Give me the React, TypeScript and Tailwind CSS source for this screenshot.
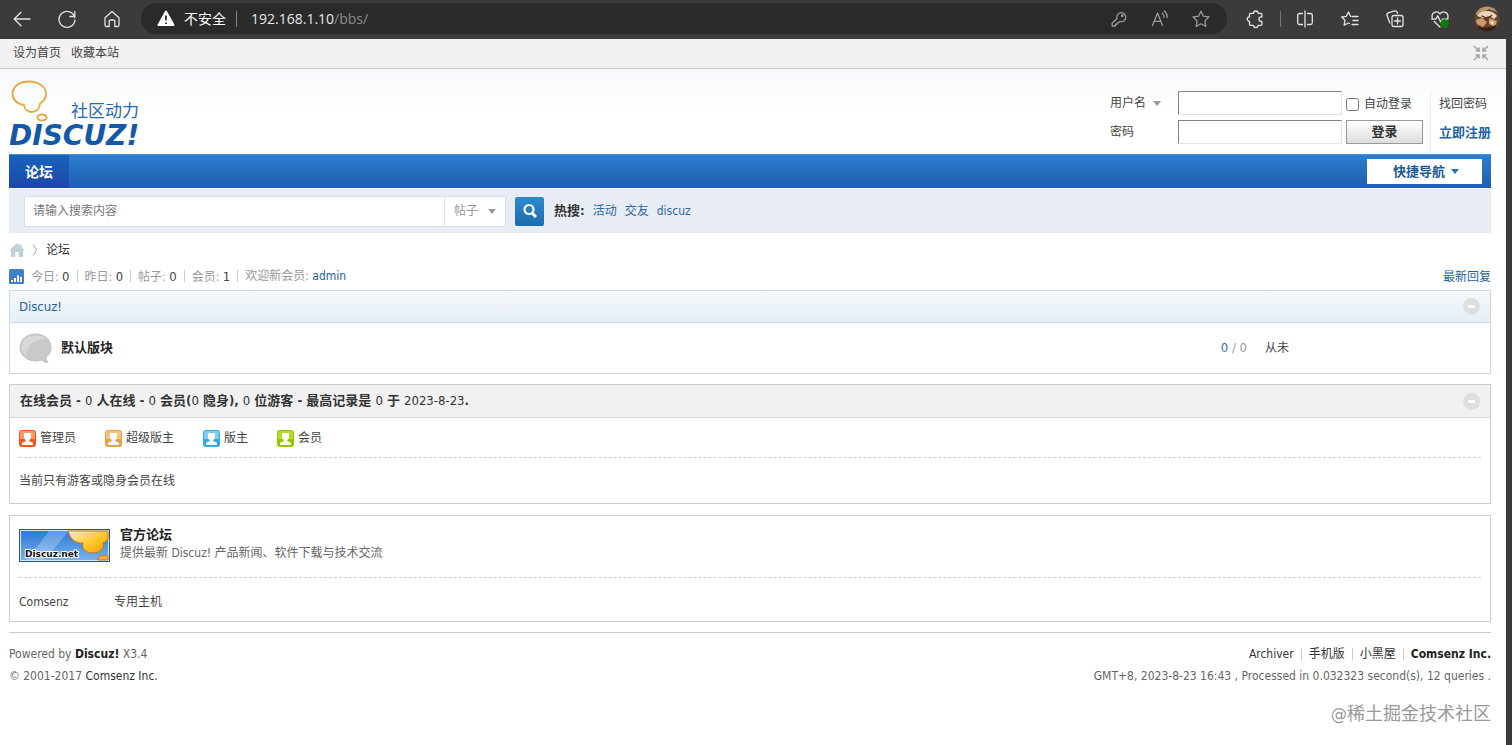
import type { ReactNode } from 'react';

interface IconProps {
  children: ReactNode;
  className?: string;
}

interface RoleLegend {
  label: string;
  light: string;
  dark: string;
}

const roles: RoleLegend[] = [
  { label: '管理员', light: '#f79a68', dark: '#f0551c' },
  { label: '超级版主', light: '#f5c37c', dark: '#e8a042' },
  { label: '版主', light: '#7fcdf0', dark: '#35a9dc' },
  { label: '会员', light: '#b5dc2c', dark: '#93c400' },
];

const stats = [
  { label: '今日', value: '0' },
  { label: '昨日', value: '0' },
  { label: '帖子', value: '0' },
  { label: '会员', value: '1' },
];

const hotSearches = ['活动', '交友', 'discuz'];

const Icon = ({ children, className = 'text-[#e4e4e4]' }: IconProps) => (
  <svg
    width="20"
    height="20"
    viewBox="0 0 20 20"
    fill="none"
    stroke="currentColor"
    strokeWidth="1.3"
    strokeLinecap="round"
    strokeLinejoin="round"
    className={className}
    aria-hidden="true"
  >
    {children}
  </svg>
);

const ToolButton = ({ label, children }: { label: string; children: ReactNode }) => (
  <button type="button" aria-label={label} className="flex h-5 w-5 shrink-0 items-center justify-center">
    {children}
  </button>
);

const Caret = ({ className }: { className: string }) => (
  <svg width="8" height="5" viewBox="0 0 8 5" className={className} aria-hidden="true">
    <path d="M0 0h8L4 5z" fill="currentColor" />
  </svg>
);

const Divider = () => <span className="h-3 w-px bg-[#cccccc]" />;

const BrowserBar = () => (
  <header className="flex h-[39px] items-center bg-[#3b3b3b] px-3 pb-[2px]">
    <div className="flex items-center gap-[25px]">
      <ToolButton label="Back">
        <Icon>
          <path d="M18 10H2.500M9 3.200 2.200 10 9 16.800" />
        </Icon>
      </ToolButton>
      <ToolButton label="Refresh">
        <Icon>
          <path d="M17.800 8.500A8 8 0 1 0 18 11M17.800 2.500v5h-5" />
        </Icon>
      </ToolButton>
      <ToolButton label="Home">
        <Icon>
          <path d="M3 8.800 10 2.500l7 6.300V16a1.500 1.500 0 0 1-1.500 1.500h-2.700V12a1 1 0 0 0-1-1H8.200a1 1 0 0 0-1 1v5.500H4.500A1.500 1.500 0 0 1 3 16z" />
        </Icon>
      </ToolButton>
    </div>
    <div className="ml-[19px] flex h-[31px] flex-1 items-center rounded-full bg-[#2a2a2a] px-4 font-[family-name:'Open_Sans','Noto_Sans_CJK_SC',sans-serif] text-sm">
      <svg width="18" height="17" viewBox="0 0 18 17" aria-hidden="true">
        <path d="M9 1.500 16.500 15h-15z" fill="#fff" stroke="#fff" strokeWidth="2" strokeLinejoin="round" />
        <path d="M9 5.500v5M9 12.500v1.500" stroke="#2a2a2a" strokeWidth="1.800" />
      </svg>
      <span className="ml-[9px] text-white">不安全</span>
      <span className="mx-[10px] h-4 w-px bg-[#858585]" />
      <span className="ml-1 flex-1 text-[#e8e8e8]">
        192.168.1.10<span className="text-[#8c8c8c]">/bbs/</span>
      </span>
      <div className="flex items-center gap-[21px]">
        <ToolButton label="Saved passwords">
          <Icon className="text-[#9a9a9a]">
            <path d="M8 9.500a4.500 4.500 0 1 1 3 3l-1.500 1.300H8v1.500H6.500v1.700H3.200v-2.800z" />
            <circle cx="13.300" cy="6.700" r="0.800" />
          </Icon>
        </ToolButton>
        <ToolButton label="Read aloud">
          <Icon className="text-[#9a9a9a]">
            <path d="M2.500 16.500 7.500 4l5 12.500M4.200 12.300h6.600M12.300 4.300a5 5 0 0 1 1.700 4M14.300 2a8 8 0 0 1 3 6.500" />
          </Icon>
        </ToolButton>
        <ToolButton label="Add to favourites">
          <Icon className="text-[#9a9a9a]">
            <path d="m10 2.200 2.400 5 5.500.8-4 3.900 1 5.500-4.900-2.600-4.900 2.600 1-5.500-4-3.900 5.500-.8z" />
          </Icon>
        </ToolButton>
      </div>
    </div>
    <div className="ml-[19px] flex items-center">
      <ToolButton label="Extensions">
        <Icon>
          <path d="M4.500 4.300h3a2.300 2.300 0 0 1 4.600 0h2.800a1 1 0 0 1 1 1v2.600h-.8a2.200 2.200 0 0 0 0 4.400h.8v3a1 1 0 0 1-1 1h-2.800a2.300 2.300 0 0 1-4.600 0h-3a1 1 0 0 1-1-1v-3a2.200 2.200 0 0 1 0-4.400V5.300a1 1 0 0 1 1-1z" />
        </Icon>
      </ToolButton>
      <span className="mx-[14px] h-4 w-px bg-[#777]" />
      <div className="flex items-center gap-[25px]">
        <ToolButton label="Split screen">
          <Icon>
            <path d="M10 2v16M7.500 4.500h-3A1.800 1.800 0 0 0 2.700 6.300v7.400a1.800 1.800 0 0 0 1.800 1.800h3M12.500 4.500h3a1.800 1.800 0 0 1 1.800 1.800v7.400a1.800 1.800 0 0 1-1.800 1.800h-3" />
          </Icon>
        </ToolButton>
        <ToolButton label="Favourites">
          <Icon>
            <path d="M12 7.500h6M13 11.500h5M12 15.500h6M10.500 7.300 8.500 3 6.300 7.300l-4.600.7L5 11.300l-.9 5 4.300-2.300 1 .5" />
          </Icon>
        </ToolButton>
        <ToolButton label="Collections">
          <Icon>
            <rect x="7" y="6.500" width="11" height="11" rx="2" />
            <path d="M12.500 9v6M9.500 12h6M4.800 14 2 6.300a2 2 0 0 1 1.300-2.400l6.300-2a2 2 0 0 1 2.500 1.400l.3 1" />
          </Icon>
        </ToolButton>
        <ToolButton label="Browser essentials">
          <Icon>
            <path d="M2.200 9C.800 3.500 7.500 1 10 5c2.500-4 9.200-1.500 7.800 4M1.800 10.200h4l2-3.400 3 6.500 1.700-3.100h5.500M4.200 12.500 10 18" />
            <circle cx="14.500" cy="14.500" r="3.500" fill="#107c10" stroke="#107c10" />
          </Icon>
        </ToolButton>
      </div>
      <button type="button" aria-label="Profile" className="ml-6">
        <svg width="26" height="26" viewBox="0 0 26 26" aria-hidden="true">
          <clipPath id="avatar">
            <circle cx="13" cy="13" r="12.500" />
          </clipPath>
          <g clipPath="url(#avatar)">
            <rect width="26" height="26" fill="#6b422b" />
            <path d="M0 0h26v7L15 3 4 9 0 8z" fill="#b39673" />
            <path d="M3 10c4-6 15-7 20 0l-3 3-5-3-6 2z" fill="#ead7bb" />
            <path d="m2 14 6-2 5 4-4 5-6-3zM15 12l8 3-2 6-6-3z" fill="#cc9a70" />
            <path d="M7 10c3 0 5 2 6 4M18 9l-3 3" stroke="#4a2b20" strokeWidth="1.200" fill="none" />
            <path d="M4 20c5 3 12 2 18-1v7H4z" fill="#351e18" />
            <path d="m16 15 4 1-2 3z" fill="#fff0df" />
          </g>
        </svg>
      </button>
    </div>
  </header>
);

const Logo = () => (
  <a href="#home" aria-label="Discuz! 社区动力" className="block">
    <svg width="140" height="74" viewBox="0 0 140 74">
      <g fill="none" stroke="#eda638" strokeWidth="1.800">
        <path d="M14 27C7 26.500 2.500 21 2.500 16 2.500 8 10 3.500 19 3.500S36 8.500 36 15.500c0 5-2.500 8-6 10 0 5.500-4 8.500-8.500 8.500-3.500 0-7-2.500-7.500-7z" />
        <ellipse cx="32" cy="39.500" rx="4.500" ry="3" strokeWidth="2" />
      </g>
      <text
        x="61"
        y="39"
        fontSize="17"
        fill="#2768b4"
        className="font-[family-name:'Noto_Sans_CJK_SC',sans-serif]"
      >
        社区动力
      </text>
      <text
        x="-1"
        y="67"
        fontSize="28"
        fontStyle="italic"
        fontWeight="700"
        fill="#1459a9"
        className="font-[family-name:'DejaVu_Sans',sans-serif]"
      >
        DISCUZ!
      </text>
    </svg>
  </a>
);

const LoginForm = () => (
  <form className="grid grid-cols-[64px_164px_77px] content-start gap-x-1 gap-y-[5px]">
    <label className="relative flex h-6 items-center">
      <select aria-label="登录方式" className="h-6 w-[52px] appearance-none bg-transparent">
        <option>用户名</option>
        <option>Email</option>
      </select>
      <Caret className="pointer-events-none absolute left-[43px] text-[#999]" />
    </label>
    <input
      type="text"
      aria-label="用户名"
      className="h-6 border border-[#e2e2e2] border-t-[#848484] border-l-[#848484] bg-white px-1"
    />
    <label className="flex h-6 items-center gap-[5px] pt-[2px] whitespace-nowrap">
      <input type="checkbox" className="m-0 h-[13px] w-[13px]" />
      自动登录
    </label>
    <label htmlFor="password" className="flex h-6 items-center">
      密码
    </label>
    <input
      id="password"
      type="password"
      className="h-6 border border-[#e2e2e2] border-t-[#848484] border-l-[#848484] bg-white px-1"
    />
    <button
      type="button"
      className="h-6 border border-[#999] bg-linear-to-b from-white to-[#dedede] text-[13px] leading-5 font-bold text-[#333]"
    >
      登录
    </button>
  </form>
);

const CollapseButton = () => (
  <button type="button" aria-label="收起/展开" className="flex h-[17px] w-[17px] items-center justify-center rounded-full bg-[#dedede]">
    <span className="h-[3px] w-[7px] bg-white" />
  </button>
);

const RoleIcon = ({ light, dark }: { light: string; dark: string }) => (
  <svg width="17" height="17" viewBox="0 0 17 17" aria-hidden="true">
    <rect x="0.500" y="0.500" width="16" height="16" rx="2" fill={light} stroke={dark} />
    <path d="M1 9h15v7H1z" fill={dark} />
    <path d="M5 3h7v4.500c0 1.300-1 2-1.700 2.600v1.200l3.700 1.500V15H3v-2.200l3.700-1.500v-1.200C6 9.500 5 8.800 5 7.500z" fill="#fff" />
  </svg>
);

const DiscuzBanner = () => (
  <svg width="91" height="33" viewBox="0 0 91 33" aria-label="Discuz.net">
    <defs>
      <linearGradient id="sky" x1="0" y1="0" x2="0" y2="1">
        <stop offset="0" stopColor="#2d78d2" />
        <stop offset="1" stopColor="#78b1ee" />
      </linearGradient>
      <linearGradient id="sun" x1="0" y1="0" x2="1" y2="1">
        <stop offset="0" stopColor="#fff0cc" />
        <stop offset="0.600" stopColor="#ffc31e" />
        <stop offset="1" stopColor="#f59a12" />
      </linearGradient>
    </defs>
    <rect width="91" height="33" fill="#28548c" />
    <rect x="1" y="1" width="89" height="31" fill="#d5e7fa" />
    <rect x="2" y="2" width="87" height="29" fill="url(#sky)" />
    <path d="M30 2h20L25 31H8z" fill="#fff" opacity="0.250" />
    <path d="M49 2c2 8 8 13 15 12-2 6 3 10 10 10s12-5 10-10c3-1 5-3 5-5V2z" fill="url(#sun)" stroke="#c57413" />
    <path d="M79 31c0-4 5-6 10-4v4z" fill="#ffae3d" stroke="#c57413" />
    <text
      x="6"
      y="28"
      fontSize="9"
      fontWeight="700"
      fill="#111"
      stroke="#fff"
      strokeWidth="2"
      paintOrder="stroke"
      className="font-[family-name:'DejaVu_Sans',sans-serif]"
    >
      Discuz.net
    </text>
  </svg>
);

const ForumPanel = () => (
  <section className="mt-[3px] border border-[#cdd7dc]">
    <div className="flex h-8 items-center justify-between border-b border-[#c9dbe8] bg-linear-to-b from-[#f5f8fa] to-[#e5eef7] pr-[10px] pl-[9px]">
      <h2>
        <a href="#discuz" className="text-[13px] text-[#23639f]">
          Discuz!
        </a>
      </h2>
      <CollapseButton />
    </div>
    <table className="w-full table-fixed">
      <tbody>
        <tr className="h-[50px]">
          <td className="w-[51px] pl-[9px]">
            <svg width="33" height="31" viewBox="0 0 33 31" aria-hidden="true">
              <path d="M16.500 1C7.500 1 1 7 1 14.500S8 28 16.500 28c2 0 4-.3 5.800-1 1.500 1.200 3.500 2.500 6.700 2.500-1.500-1.500-1.800-3.500-1.800-5.200 3-2.500 4.800-5.800 4.800-9.800C32 7 25.500 1 16.500 1z" fill="#c9c9c9" stroke="#c2c2c2" />
              <path d="M2.500 15C2.500 7.500 9 2.500 16.500 2.500c4 0 7.500 1 10 3.200C16 5.500 8 11.500 7.500 22 4.500 20.500 2.500 18 2.500 15z" fill="#d9d9d9" />
            </svg>
          </td>
          <td>
            <a href="#default-board" className="text-[13px] font-bold text-[#222]">
              默认版块
            </a>
          </td>
          <td className="w-20 text-right text-[13px] text-[#999]">
            <span className="text-[#3d6a9e]">0</span> / 0
          </td>
          <td className="w-[243px] pl-[18px] text-[#444]">从未</td>
        </tr>
      </tbody>
    </table>
  </section>
);

const OnlinePanel = () => (
  <section className="mt-[10px] border border-[#cdcdcd]">
    <div className="flex h-[33px] items-center justify-between border-b border-[#d5d5d5] bg-[#f1f1f1] px-[10px]">
      <h3 className="text-[13px] font-bold text-[#333]">
        在线会员 - <span className="font-normal">0</span> 人在线 - <span className="font-normal">0</span> 会员(
        <span className="font-normal">0</span> 隐身), <span className="font-normal">0</span> 位游客 - 最高记录是{' '}
        <span className="font-normal">0</span> 于 <span className="font-normal">2023-8-23</span>.
      </h3>
      <CollapseButton />
    </div>
    <div className="px-[9px]">
      <ul className="flex h-10 items-center gap-[29px] border-b border-dashed border-[#cdcdcd] pt-px">
        {roles.map((role) => (
          <li key={role.label} className="flex items-center gap-1">
            <RoleIcon light={role.light} dark={role.dark} />
            {role.label}
          </li>
        ))}
      </ul>
      <p className="flex h-[45px] items-center pt-px">当前只有游客或隐身会员在线</p>
    </div>
  </section>
);

const LinksPanel = () => (
  <section className="mt-[11px] border border-[#cdcdcd] px-[9px]">
    <div className="flex h-[62px] gap-[10px] border-b border-dashed border-[#cdcdcd] pt-[13px]">
      <a href="#official">
        <DiscuzBanner />
      </a>
      <div className="-mt-1">
        <h4 className="text-[13px] leading-[19px] font-bold text-[#222]">
          <a href="#official">官方论坛</a>
        </h4>
        <p className="leading-[19px] text-[#666]">提供最新 Discuz! 产品新闻、软件下载与技术交流</p>
      </div>
    </div>
    <ul className="flex h-[43px] items-center pt-1">
      <li className="w-[95px]">
        <a href="#comsenz">Comsenz</a>
      </li>
      <li>
        <a href="#hosting">专用主机</a>
      </li>
    </ul>
  </section>
);

const Footer = () => (
  <footer className="mt-[10px] flex justify-between border-t border-[#cdcdcd] pt-[10px] leading-[22px] text-[#666]">
    <div>
      <p>
        Powered by{' '}
        <a href="#discuz" className="font-bold text-[#222]">
          Discuz!
        </a>{' '}
        X3.4
      </p>
      <p>
        © 2001-2017{' '}
        <a href="#comsenz" className="text-[#333]">
          Comsenz Inc.
        </a>
      </p>
    </div>
    <div className="flex flex-col items-end">
      <div className="flex items-center gap-[7px] text-[#333]">
        <a href="#archiver">Archiver</a>
        <Divider />
        <a href="#mobile">手机版</a>
        <Divider />
        <a href="#darkroom">小黑屋</a>
        <Divider />
        <a href="#comsenz" className="font-bold text-[#222]">
          Comsenz Inc.
        </a>
      </div>
      <p>GMT+8, 2023-8-23 16:43 , Processed in 0.032323 second(s), 12 queries .</p>
      <p className="mt-[15px] text-lg leading-6 text-[#999]">@稀土掘金技术社区</p>
    </div>
  </footer>
);

const App = () => (
  <div className="flex min-h-screen flex-col bg-[#3b3b3b] font-[family-name:'DejaVu_Sans_Condensed','Noto_Sans_CJK_SC',sans-serif] text-xs text-[#444]">
    <BrowserBar />
    <div className="mr-[6px] flex-1 bg-white">
      <div className="flex h-[30px] items-center justify-between border-b border-[#cdcdcd] bg-[#f1f1f1] pr-[17px] pb-[2px] pl-[13px]">
        <div className="flex gap-[10px]">
          <a href="#set-home">设为首页</a>
          <a href="#bookmark">收藏本站</a>
        </div>
        <button type="button" aria-label="切换到窄版" className="text-[#a5a5a5]">
          <svg width="16" height="16" viewBox="0 0 16 16" fill="none" stroke="currentColor" strokeWidth="1.700" aria-hidden="true">
            <path d="m1 1 5 5M6 2.500V6H2.500M15 1l-5 5M10 2.500V6h3.500M1 15l5-5M6 13.500V10H2.500M15 15l-5-5M10 13.500V10h3.500" />
          </svg>
        </button>
      </div>
      <div className="flex h-[85px] justify-between bg-linear-to-b from-[#f5f8fb] to-white to-50% pt-[9px] pr-[15px] pl-[10px]">
        <Logo />
        <div className="flex pt-[13px]">
          <LoginForm />
          <div className="ml-[7px] flex h-[62px] w-[61px] flex-col gap-[5px] border-l border-[#ededed] pl-2">
            <a href="#forgot" className="flex h-6 items-center pt-[2px]">
              找回密码
            </a>
            <a href="#register" className="flex h-6 items-center pt-[2px] text-[13px] font-bold whitespace-nowrap text-[#23639f]">
              立即注册
            </a>
          </div>
        </div>
      </div>
      <main className="pr-[15px] pl-[9px]">
        <nav className="flex h-[34px] items-center justify-between border-t border-[#4a8fce] bg-linear-to-b from-[#2b7fd0] to-[#1f5db0] pr-[9px]">
          <a
            href="#forum"
            className="flex h-full w-[60px] items-center justify-center bg-linear-to-b from-[#1563bb] to-[#1d46a8] text-sm font-bold text-white"
          >
            论坛
          </a>
          <button
            type="button"
            className="flex h-[25px] w-[115px] items-center justify-center gap-[6px] bg-white pl-[3px] text-[13px] font-bold text-[#1d5a98]"
          >
            快捷导航
            <Caret className="text-[#1d76bc]" />
          </button>
        </nav>
        <form className="mt-px flex h-11 items-center bg-[#e8edf5] pl-[15px]">
          <input
            type="search"
            aria-label="搜索"
            placeholder="请输入搜索内容"
            className="h-[31px] w-[421px] border border-[#d9dfe6] bg-white px-2 placeholder:text-[#777]"
          />
          <label className="relative flex items-center">
            <select
              aria-label="搜索类型"
              className="h-[31px] w-[61px] appearance-none border border-l-0 border-[#d9dfe6] bg-white px-[9px] text-[#999]"
            >
              <option>帖子</option>
              <option>用户</option>
            </select>
            <Caret className="pointer-events-none absolute right-[10px] text-[#999]" />
          </label>
          <button
            type="button"
            aria-label="搜索"
            className="ml-[9px] flex h-[29px] w-[29px] items-center justify-center rounded-xs bg-linear-to-b from-[#2e8bd0] to-[#1a6cac]"
          >
            <svg width="16" height="16" viewBox="0 0 16 16" fill="none" stroke="#fff" aria-hidden="true">
              <circle cx="7" cy="6.500" r="4.500" strokeWidth="2.200" />
              <path d="m10 10 4 4" strokeWidth="3" />
            </svg>
          </button>
          <div className="ml-[10px] flex items-center gap-2 text-[#3068a8]">
            <strong className="text-[13px] text-[#333]">热搜:</strong>
            {hotSearches.map((word) => (
              <a key={word} href={`#${word}`}>
                {word}
              </a>
            ))}
          </div>
        </form>
        <div className="flex h-[33px] items-center gap-2">
          <a href="#home" aria-label="首页">
            <svg width="16" height="14" viewBox="0 0 16 14" fill="#c0d3da" aria-hidden="true">
              <path d="M8 0 0 7.500h2V14h4.300V9h3.400v5H14V7.500h2L13 4.700V1.500h-2v1.300z" />
            </svg>
          </a>
          <svg width="5" height="12" viewBox="0 0 5 12" fill="none" stroke="#aaa" aria-hidden="true">
            <path d="m0.500 0.500 3 5.500-3 5.500" />
          </svg>
          <a href="#forum" className="text-[#333]">
            论坛
          </a>
        </div>
        <div className="flex h-[21px] items-center text-[#999]">
          <svg width="15" height="15" viewBox="0 0 15 15" aria-hidden="true">
            <rect width="15" height="15" rx="1.500" fill="#3f7fc9" />
            <path d="M3 13v-2M6 13V9M9 13V6.500M12 13V8" stroke="#fff" strokeWidth="2" />
          </svg>
          <div className="ml-[7px] flex items-center gap-[7px]">
            {stats.map((stat) => (
              <span key={stat.label} className="flex items-center gap-[7px]">
                <span>
                  {stat.label}: <em className="text-[13px] text-[#444] not-italic">{stat.value}</em>
                </span>
                <Divider />
              </span>
            ))}
            <span>
              欢迎新会员:{' '}
              <a href="#admin" className="text-[#23639f]">
                admin
              </a>
            </span>
          </div>
          <a href="#latest" className="ml-auto text-[#23639f]">
            最新回复
          </a>
        </div>
        <ForumPanel />
        <OnlinePanel />
        <LinksPanel />
        <Footer />
      </main>
    </div>
  </div>
);

export default App;
